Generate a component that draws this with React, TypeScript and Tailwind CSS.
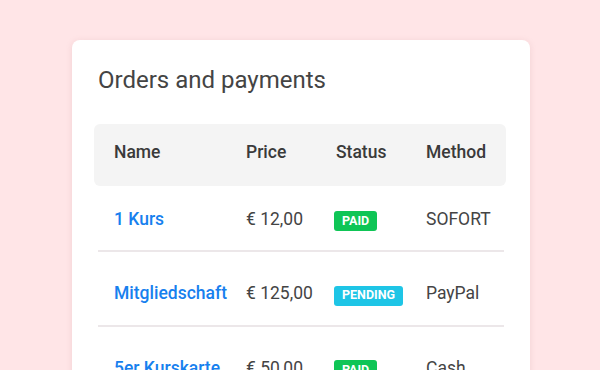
const orders = [
  { name: '1 Kurs', price: '€ 12,00', status: 'paid', method: 'SOFORT' },
  { name: 'Mitgliedschaft', price: '€ 125,00', status: 'pending', method: 'PayPal' },
  { name: '5er Kurskarte', price: '€ 50,00', status: 'paid', method: 'Cash' },
];

const StatusBadge = ({ status }: { status: string }) => {
  const color = status === 'paid' ? 'bg-[#0fc556]' : 'bg-[#1ec5e6]';
  return (
    <span
      className={`${color} inline-flex h-5 items-center rounded-[3px] px-2 text-[12.5px] font-bold uppercase leading-none text-white`}
    >
      {status}
    </span>
  );
};

export default function App() {
  return (
    <div className="h-[370px] w-[600px] overflow-hidden bg-[#ffe5e7] pl-[72px] pt-10 font-['Roboto',sans-serif]">
      <div className="h-[400px] w-[458px] rounded-lg bg-white shadow-[0_1px_6px_rgba(180,120,130,0.18)]">
        <h1 className="px-[26px] pt-[24px] text-[24px] leading-[32px] text-[#444]">
          Orders and payments
        </h1>

        <div className="ml-[22px] mt-[28px] w-[412px]">
          <div className="flex h-[62px] items-start rounded-md bg-[#f4f4f4] pt-4 text-[17.5px] font-medium leading-6 text-[#3a3a3a]">
            <div className="w-[152px] pl-5">Name</div>
            <div className="w-[90px]">Price</div>
            <div className="w-[90px]">Status</div>
            <div>Method</div>
          </div>

          <div className="ml-1 w-[406px]">
            {orders.map((o) => (
              <div
                key={o.name}
                className="flex items-center border-b-2 border-[#ece7e9] pb-[19px] pt-[29px] text-[17.5px] leading-6 first:pt-[21px]"
              >
                <div className="w-[148px] pl-4 font-medium text-[#1780ee]">{o.name}</div>
                <div className="w-[88px] text-[#444]">{o.price}</div>
                <div className="w-[92px]">
                  <StatusBadge status={o.status} />
                </div>
                <div className="text-[#444]">{o.method}</div>
              </div>
            ))}
          </div>
        </div>
      </div>
    </div>
  );
}
